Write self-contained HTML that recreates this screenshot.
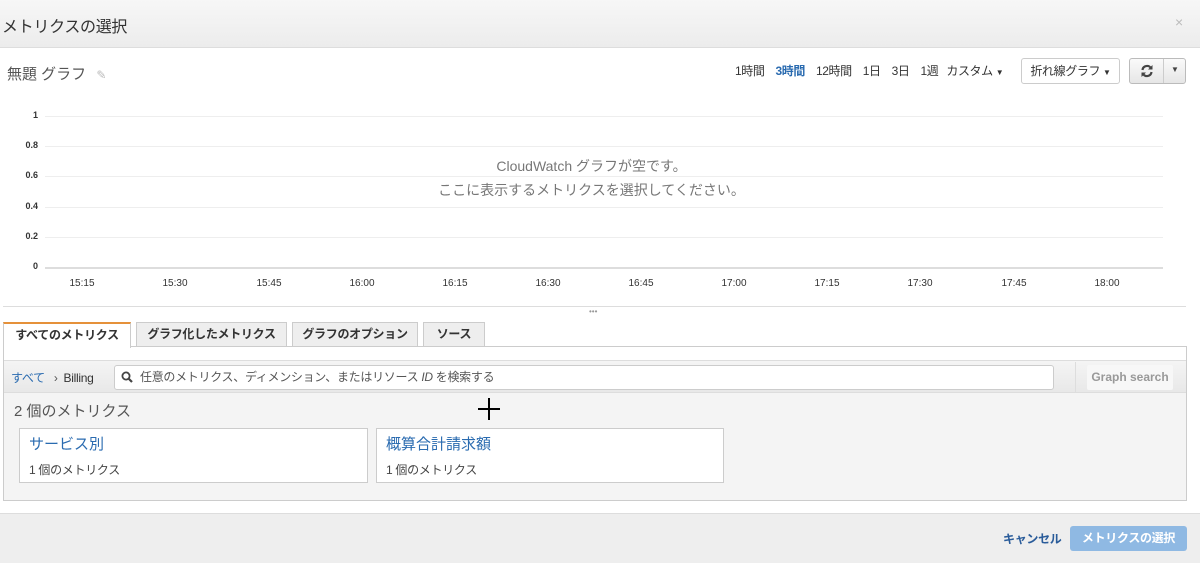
<!DOCTYPE html>
<html><head><meta charset="utf-8"><style>
*{box-sizing:border-box;margin:0;padding:0}
body{width:1200px;height:563px;position:relative;overflow:hidden;background:#fff;font-family:"Liberation Sans","Noto Sans CJK JP",sans-serif;color:#333}
.a{position:absolute;white-space:nowrap}
.hd{left:0;top:0;width:1200px;height:48px;background:linear-gradient(#f7f7f7,#ececec);border-bottom:1px solid #ddd}
.gl{position:absolute;left:45px;width:1118px;height:1px;background:#eee}
.yl{position:absolute;left:20px;width:18px;text-align:right;font-size:9px;font-weight:bold;color:#333}
.xl{position:absolute;top:278px;font-size:10px;color:#333;width:40px;text-align:center}
.tab{position:absolute;top:322px;height:25px;border:1px solid #ccc;border-bottom:none;background:#eee;font-size:12px;font-weight:bold;text-align:center;line-height:23px;color:#333;letter-spacing:-0.3px}
.card{position:absolute;top:428px;height:55px;background:#fff;border:1px solid #ccc}
.card .t{position:absolute;left:9px;top:4px;font-size:15px;color:#2a6bb0}
.card .s{position:absolute;left:9px;top:32px;font-size:12px;color:#444;letter-spacing:-0.3px}
</style></head><body>
<div class="a hd"></div>
<div class="a" style="left:2px;top:13px;font-size:16px;color:#333;letter-spacing:-0.3px">メトリクスの選択</div>
<div class="a" style="left:1175px;top:14px;font-size:14px;color:#bbb">×</div>

<div class="a" style="left:7px;top:63px;font-size:15px;color:#555">無題 グラフ <span style="color:#bbb;font-size:12px;margin-left:6px">✎</span></div>

<div class="a" style="left:735px;top:62px;font-size:12px;color:#333;letter-spacing:-0.4px">
<span>1時間</span><span style="margin-left:11px;color:#2a6bb0;font-weight:bold">3時間</span><span style="margin-left:11px">12時間</span><span style="margin-left:11px">1日</span><span style="margin-left:11px">3日</span><span style="margin-left:11px">1週</span><span style="margin-left:8px">カスタム <span style="font-size:8px">▼</span></span></div>
<div class="a" style="left:1021px;top:58px;width:99px;height:26px;border:1px solid #ccc;border-radius:3px;font-size:12px;line-height:24px;text-align:center;background:#fff;letter-spacing:-0.4px">折れ線グラフ <span style="font-size:8px">▼</span></div>
<div class="a" style="left:1129px;top:58px;width:57px;height:26px;border:1px solid #bbb;border-radius:3px;background:linear-gradient(#fafafa,#e6e6e6)">
<div class="a" style="left:33px;top:0;width:1px;height:24px;background:#ccc"></div>
<svg class="a" style="left:10px;top:5px" width="14" height="14" viewBox="0 0 14 14"><path d="M2.5 6 A4.6 4.6 0 0 1 11 4.2" fill="none" stroke="#444" stroke-width="2.2"/><path d="M11.5 8 A4.6 4.6 0 0 1 3 9.8" fill="none" stroke="#444" stroke-width="2.2"/><path d="M12.5 1 V5.5 H8Z" fill="#444"/><path d="M1.5 13 V8.5 H6Z" fill="#444"/></svg>
<div class="a" style="left:41px;top:6px;font-size:8px;color:#444">▼</div>
</div>

<div class="gl" style="top:116px"></div><div class="gl" style="top:146px"></div><div class="gl" style="top:176px"></div><div class="gl" style="top:207px"></div><div class="gl" style="top:237px"></div>
<div class="gl" style="top:267px;height:2px;background:#ddd"></div>
<div class="yl" style="top:110px">1</div><div class="yl" style="top:140px">0.8</div><div class="yl" style="top:170px">0.6</div><div class="yl" style="top:201px">0.4</div><div class="yl" style="top:231px">0.2</div><div class="yl" style="top:261px">0</div>
<div class="xl" style="left:62px">15:15</div><div class="xl" style="left:155px">15:30</div><div class="xl" style="left:249px">15:45</div><div class="xl" style="left:342px">16:00</div><div class="xl" style="left:435px">16:15</div><div class="xl" style="left:528px">16:30</div><div class="xl" style="left:621px">16:45</div><div class="xl" style="left:714px">17:00</div><div class="xl" style="left:807px">17:15</div><div class="xl" style="left:900px">17:30</div><div class="xl" style="left:994px">17:45</div><div class="xl" style="left:1087px">18:00</div>
<div class="a" style="left:0;width:1183px;top:154px;text-align:center;font-size:14px;color:#777;line-height:24px">CloudWatch グラフが空です。<br>ここに表示するメトリクスを選択してください。</div>

<div class="a" style="left:3px;top:306px;width:1183px;height:1px;background:#ddd"></div>
<div class="a" style="left:589px;top:307px;font-size:8px;color:#999">•••</div>

<div class="tab" style="left:3px;width:128px;background:#fff;border-top:2px solid #e5913a;height:26px;z-index:2">すべてのメトリクス</div>
<div class="tab" style="left:136px;width:151px">グラフ化したメトリクス</div>
<div class="tab" style="left:292px;width:126px">グラフのオプション</div>
<div class="tab" style="left:423px;width:62px">ソース</div>
<div class="a" style="left:3px;top:346px;width:1184px;height:155px;border:1px solid #ccc;background:#f4f4f4">
<div class="a" style="left:0;top:0;width:1182px;height:14px;background:#fff;border-bottom:1px solid #ddd"></div>
<div class="a" style="left:0;top:15px;width:1182px;height:31px;background:linear-gradient(#f4f4f4,#e8e8e8);border-bottom:1px solid #ddd"></div>
</div>
<div class="a" style="left:11px;top:369px;font-size:12px;color:#2a6bb0;letter-spacing:-0.3px">すべて <span style="color:#555;margin:0 6px">›</span><span style="color:#333">Billing</span></div>
<div class="a" style="left:114px;top:365px;width:940px;height:25px;background:#fff;border:1px solid #ccc;border-radius:3px;font-size:12px;color:#555;line-height:23px;padding-left:25px;letter-spacing:-0.3px">任意のメトリクス、ディメンション、またはリソース <i>ID</i> を検索する</div>
<svg class="a" style="left:121px;top:371px" width="12" height="12" viewBox="0 0 12 12"><circle cx="5" cy="5" r="3.6" fill="none" stroke="#444" stroke-width="1.8"/><path d="M7.5 7.5 L11 11" stroke="#444" stroke-width="2.2"/></svg>
<div class="a" style="left:1075px;top:362px;width:1px;height:30px;background:#ddd"></div>
<div class="a" style="left:1087px;top:365px;width:86px;height:25px;background:#f7f7f7;border-radius:2px;font-size:12px;color:#999;font-weight:bold;line-height:25px;text-align:center">Graph search</div>
<div class="a" style="left:14px;top:400px;font-size:15px;color:#555">2 個のメトリクス</div>
<div class="a" style="left:478px;top:408px;width:22px;height:1.5px;background:#000"></div>
<div class="a" style="left:488px;top:398px;width:1.5px;height:22px;background:#000"></div>
<div class="card" style="left:19px;width:349px"><div class="t">サービス別</div><div class="s">1 個のメトリクス</div></div>
<div class="card" style="left:376px;width:348px"><div class="t">概算合計請求額</div><div class="s">1 個のメトリクス</div></div>

<div class="a" style="left:0;top:513px;width:1200px;height:50px;background:#eee;border-top:1px solid #ddd"></div>
<div class="a" style="left:1003px;top:530px;font-size:12px;font-weight:bold;color:#2a5c9a;letter-spacing:-0.3px">キャンセル</div>
<div class="a" style="left:1070px;top:526px;width:117px;height:25px;background:#8fb9e3;border-radius:3px;color:#fff;font-size:12px;font-weight:bold;text-align:center;line-height:25px;letter-spacing:-0.3px">メトリクスの選択</div>
</body></html>
